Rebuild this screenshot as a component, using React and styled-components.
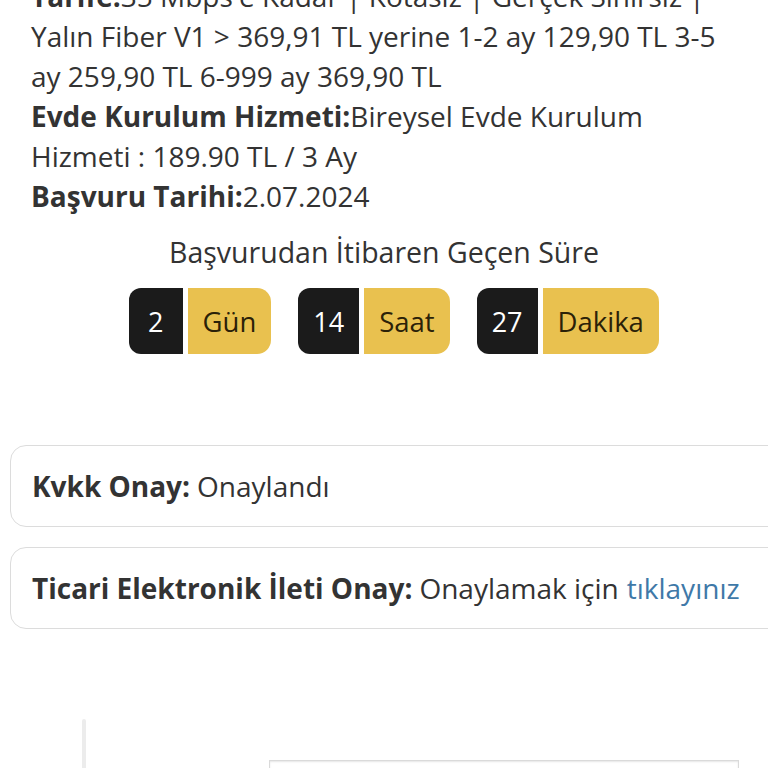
import React from 'react';
import styled, { createGlobalStyle } from 'styled-components';

const GlobalStyle = createGlobalStyle`
  html, body {
    margin: 0;
    padding: 0;
    background: #fff;
    overflow: hidden;
  }
  body {
    font-family: 'Open Sans', 'Noto Sans', sans-serif;
    color: #333;
  }
`;

const Page = styled.div`
  width: 768px;
  height: 768px;
  overflow: hidden;
`;

const Details = styled.div`
  margin-top: -24px;
  padding: 0 45px 0 31px;
  font-size: 28px;
  line-height: 40px;
`;

const InfoRow = styled.div`
  & > b {
    font-weight: 700;
  }
`;

const TimerTitle = styled.h3`
  margin: 17px 0 0;
  text-align: center;
  font-size: 28.5px;
  font-weight: 400;
  line-height: 38px;
  color: #333;
`;

const TimerRow = styled.div`
  display: flex;
  justify-content: center;
  gap: 27px;
  margin-top: 17px;
  padding-left: 20px;
`;

const TimerUnit = styled.div`
  display: flex;
  gap: 5px;
  height: 66px;
`;

const TimerValue = styled.div`
  display: flex;
  align-items: center;
  padding: 0 ${({ $wide }) => ($wide ? 15 : 19)}px;
  background: #1b1b1b;
  color: #fff;
  border-radius: 12px 0 0 12px;
  font-size: 27px;
`;

const TimerLabel = styled.div`
  display: flex;
  align-items: center;
  padding: 0 15px;
  background: #e9c14f;
  color: #2b2108;
  border-radius: 0 14px 14px 0;
  font-size: 27.5px;
`;

const Cards = styled.div`
  display: flex;
  flex-direction: column;
  gap: 20px;
  margin-top: 91px;
  padding-left: 10px;
`;

const Card = styled.div`
  width: 790px;
  height: 82px;
  box-sizing: border-box;
  display: flex;
  align-items: center;
  padding: 0 21px;
  border: 1px solid #dcdcdc;
  border-radius: 16px;
  font-size: 28px;
  color: #333;
  & > b {
    font-weight: 700;
    margin-right: 7px;
  }
`;

const Link = styled.a`
  color: #3f79a8;
  text-decoration: none;
  margin-left: 8px;
`;

const Bottom = styled.div`
  display: flex;
  margin-top: 90px;
  padding-left: 82px;
`;

const Divider = styled.div`
  width: 4px;
  height: 60px;
  background: #ececec;
  border-radius: 2px;
`;

const TableBox = styled.div`
  margin: 41px 0 0 183px;
  width: 468px;
  height: 40px;
  border: 1px solid #dadada;
  border-bottom: none;
  box-shadow: inset 0 1px 2px #e6e6e6;
`;

const timers = [
  { value: '2', label: 'Gün' },
  { value: '14', label: 'Saat' },
  { value: '27', label: 'Dakika' },
];

export default function App() {
  return (
    <Page>
      <GlobalStyle />
      <Details>
        <InfoRow>
          <b>Tarife:</b>35 Mbps'e Kadar | Kotasız | Gerçek Sınırsız | Yalın Fiber V1 &gt; 369,91 TL yerine 1-2 ay 129,90 TL 3-5 ay 259,90 TL 6-999 ay 369,90 TL
        </InfoRow>
        <InfoRow>
          <b>Evde Kurulum Hizmeti:</b>Bireysel Evde Kurulum Hizmeti : 189.90 TL / 3 Ay
        </InfoRow>
        <InfoRow>
          <b>Başvuru Tarihi:</b>2.07.2024
        </InfoRow>
      </Details>

      <TimerTitle>Başvurudan İtibaren Geçen Süre</TimerTitle>
      <TimerRow>
        {timers.map((t) => (
          <TimerUnit key={t.label}>
            <TimerValue $wide={t.value.length > 1}>{t.value}</TimerValue>
            <TimerLabel>{t.label}</TimerLabel>
          </TimerUnit>
        ))}
      </TimerRow>

      <Cards>
        <Card>
          <b>Kvkk Onay:</b>Onaylandı
        </Card>
        <Card>
          <b>Ticari Elektronik İleti Onay:</b>Onaylamak için<Link href="#">tıklayınız</Link>
        </Card>
      </Cards>

      <Bottom>
        <Divider />
        <TableBox />
      </Bottom>
    </Page>
  );
}
